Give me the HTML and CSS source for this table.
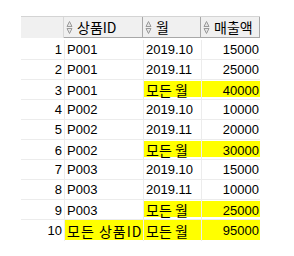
FILE: index.html
```html
<!DOCTYPE html>
<html>
<head>
<meta charset="utf-8">
<link rel="stylesheet" href="styles.css">
</head>
<body>
<div class="grid">
  <div class="head">
    <div class="c num"></div>
    <div class="c hc"><svg class="sort" width="7" height="15" viewBox="0 0 7 15"><path d="M3.5 1.5 L6 6.5 L1 6.5 Z M1 8.5 L6 8.5 L3.5 13.5 Z" fill="#e4e4e4" stroke="#9a9a9a" stroke-width="1"/></svg><span class="ko">상품ID</span></div>
    <div class="c hc"><svg class="sort" width="7" height="15" viewBox="0 0 7 15"><path d="M3.5 1.5 L6 6.5 L1 6.5 Z M1 8.5 L6 8.5 L3.5 13.5 Z" fill="#e4e4e4" stroke="#9a9a9a" stroke-width="1"/></svg><span class="ko">월</span></div>
    <div class="c hc"><svg class="sort" width="7" height="15" viewBox="0 0 7 15"><path d="M3.5 1.5 L6 6.5 L1 6.5 Z M1 8.5 L6 8.5 L3.5 13.5 Z" fill="#e4e4e4" stroke="#9a9a9a" stroke-width="1"/></svg><span class="ko">매출액</span></div>
  </div>
  <div class="row"><div class="c num">1</div><div class="c">P001</div><div class="c">2019.10</div><div class="c amt">15000</div></div>
  <div class="row"><div class="c num">2</div><div class="c">P001</div><div class="c">2019.11</div><div class="c amt">25000</div></div>
  <div class="row"><div class="c num">3</div><div class="c">P001</div><div class="c hl ko">모든 월</div><div class="c amt hl">40000</div></div>
  <div class="row"><div class="c num">4</div><div class="c">P002</div><div class="c">2019.10</div><div class="c amt">10000</div></div>
  <div class="row"><div class="c num">5</div><div class="c">P002</div><div class="c">2019.11</div><div class="c amt">20000</div></div>
  <div class="row"><div class="c num">6</div><div class="c">P002</div><div class="c hl ko">모든 월</div><div class="c amt hl">30000</div></div>
  <div class="row"><div class="c num">7</div><div class="c">P003</div><div class="c">2019.10</div><div class="c amt">15000</div></div>
  <div class="row"><div class="c num">8</div><div class="c">P003</div><div class="c">2019.11</div><div class="c amt">10000</div></div>
  <div class="row"><div class="c num">9</div><div class="c">P003</div><div class="c hl ko">모든 월</div><div class="c amt hl">25000</div></div>
  <div class="row last"><div class="c num">10</div><div class="c hl ko wide">모든 상품ID</div><div class="c hl ko">모든 월</div><div class="c amt hl">95000</div></div>
</div>
</body>
</html>
```

FILE: styles.css
```css
html, body {
  margin: 0;
  padding: 0;
  background: #ffffff;
}
body {
  font-family: "Liberation Sans", Arial, sans-serif;
  font-size: 13px;
  color: #000;
}
.grid {
  margin: 16px 0 0 21px;
  width: 239px;
}
.head, .row {
  display: grid;
  grid-template-columns: 43px 79px 58px 59px;
  box-sizing: border-box;
}
.head {
  height: 22px;
  background: #f0f0f0;
  border-top: 1px solid #d4d4d4;
  margin-bottom: 2px;
}
.head .c {
  border-right: 1px solid #a8a8a8;
  border-bottom: 1px solid #a8a8a8;
}
.head .c.num {
  border-right: 1px solid #d8d8d8;
  border-bottom: none;
}
.hc {
  display: flex;
  align-items: center;
  padding-left: 3px;
  gap: 4px;
}
.sort {
  flex: none;
}
.row {
  height: 20px;
  border-bottom: 1px solid #ececec;
}
.row.last {
  border-bottom: none;
  height: 21px;
}
.c {
  box-sizing: border-box;
  display: flex;
  align-items: center;
  padding-left: 2px;
  white-space: nowrap;
  border-left: 1px solid #ececec;
  min-width: 0;
}
.head .c {
  border-left: none;
}
.row .c.num {
  justify-content: flex-end;
  padding-right: 2px;
  border-left: none;
}
.amt {
  justify-content: flex-end;
  padding-right: 1px;
}
.ko {
  font-family: "Noto Sans CJK KR", "Liberation Sans", sans-serif;
  font-size: 14px;
}
.wide {
  letter-spacing: 1px;
}
.hl {
  background: linear-gradient(#ffff00, #ffff00) no-repeat;
  background-size: 100% 16px;
  background-position: 0 1px;
}
.row.last .hl {
  background-size: 100% 20px;
  background-position: 0 0;
}
```
